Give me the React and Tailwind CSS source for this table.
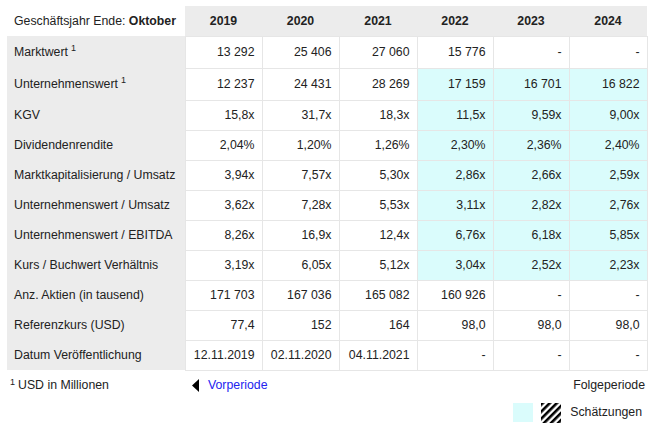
const YEARS = ['2019', '2020', '2021', '2022', '2023', '2024'];

// est = index of the first estimated (cyan) column, -1 if none
const ROWS = [
  { label: 'Marktwert', sup: true, est: -1, values: ['13 292', '25 406', '27 060', '15 776', '-', '-'] },
  { label: 'Unternehmenswert', sup: true, est: 3, values: ['12 237', '24 431', '28 269', '17 159', '16 701', '16 822'] },
  { label: 'KGV', est: 3, values: ['15,8x', '31,7x', '18,3x', '11,5x', '9,59x', '9,00x'] },
  { label: 'Dividendenrendite', est: 3, values: ['2,04%', '1,20%', '1,26%', '2,30%', '2,36%', '2,40%'] },
  { label: 'Marktkapitalisierung / Umsatz', est: 3, values: ['3,94x', '7,57x', '5,30x', '2,86x', '2,66x', '2,59x'] },
  { label: 'Unternehmenswert / Umsatz', est: 3, values: ['3,62x', '7,28x', '5,53x', '3,11x', '2,82x', '2,76x'] },
  { label: 'Unternehmenswert / EBITDA', est: 3, values: ['8,26x', '16,9x', '12,4x', '6,76x', '6,18x', '5,85x'] },
  { label: 'Kurs / Buchwert Verhältnis', est: 3, values: ['3,19x', '6,05x', '5,12x', '3,04x', '2,52x', '2,23x'] },
  { label: 'Anz. Aktien (in tausend)', est: -1, values: ['171 703', '167 036', '165 082', '160 926', '-', '-'] },
  { label: 'Referenzkurs (USD)', est: -1, values: ['77,4', '152', '164', '98,0', '98,0', '98,0'] },
  { label: 'Datum Veröffentlichung', est: -1, values: ['12.11.2019', '02.11.2020', '04.11.2021', '-', '-', '-'] },
];

const COL_W = ['w-[77px]', 'w-[77px]', 'w-[78px]', 'w-[76px]', 'w-[76px]', 'w-[78px]'];

function Sup() {
  return <sup className="text-[9px] ml-[3px]">1</sup>;
}

function HatchBox() {
  return (
    <svg width="20" height="20" viewBox="0 0 20 20">
      <defs>
        <pattern id="hatch" width="5" height="5" patternUnits="userSpaceOnUse" patternTransform="rotate(45)">
          <rect width="2.6" height="5" fill="#000" />
        </pattern>
      </defs>
      <rect width="20" height="20" fill="url(#hatch)" />
    </svg>
  );
}

export default function App() {
  return (
    <div className="w-[649px] h-[434px] bg-white text-[#222] text-[12.3px] font-['Liberation_Sans',Arial,sans-serif] pt-[6px] pl-[7px]">
      <table className="w-[640px] border-collapse table-fixed">
        <thead>
          <tr>
            <th className="w-[178px] h-[30px] bg-white text-left font-normal pl-[7px] whitespace-nowrap">
              Geschäftsjahr Ende: <span className="font-bold">Oktober</span>
            </th>
            {YEARS.map((y, i) => (
              <th key={y} className={`${COL_W[i]} h-[30px] bg-[#ececec] text-center font-bold`}>
                {y}
              </th>
            ))}
          </tr>
        </thead>
        <tbody>
          {ROWS.map((row) => (
            <tr key={row.label}>
              <td
                className={`bg-[#ececec] pl-[7px] whitespace-nowrap ${row.sup ? 'h-[32px]' : 'h-[30px]'}`}
              >
                {row.label}
                {row.sup && <Sup />}
              </td>
              {row.values.map((v, i) => (
                <td
                  key={i}
                  className={`text-right pr-[7px] border border-[#e6e6e6] whitespace-nowrap ${
                    row.est >= 0 && i >= row.est ? 'bg-[#dafcfc]' : 'bg-white'
                  }`}
                >
                  {v}
                </td>
              ))}
            </tr>
          ))}
        </tbody>
      </table>

      <div className="flex items-center h-[30px] w-[640px]">
        <div className="w-[178px] pl-[3px]">
          <sup className="text-[9px] mr-[3px]">1</sup>USD in Millionen
        </div>
        <div className="flex items-center pl-[7px]">
          <svg width="7" height="13" viewBox="0 0 7 13">
            <polygon points="7,0 7,13 0,6.5" fill="#000" />
          </svg>
          <span className="ml-[9px] text-[#2323f0]">Vorperiode</span>
        </div>
        <div className="ml-auto pr-[2px]">Folgeperiode</div>
      </div>

      <div className="flex items-center justify-end w-[640px] h-[24px] pr-[5px]">
        <div className="w-[20px] h-[19px] bg-[#dafcfc]" />
        <div className="ml-[8px] flex">
          <HatchBox />
        </div>
        <span className="ml-[9px]">Schätzungen</span>
      </div>
    </div>
  );
}
